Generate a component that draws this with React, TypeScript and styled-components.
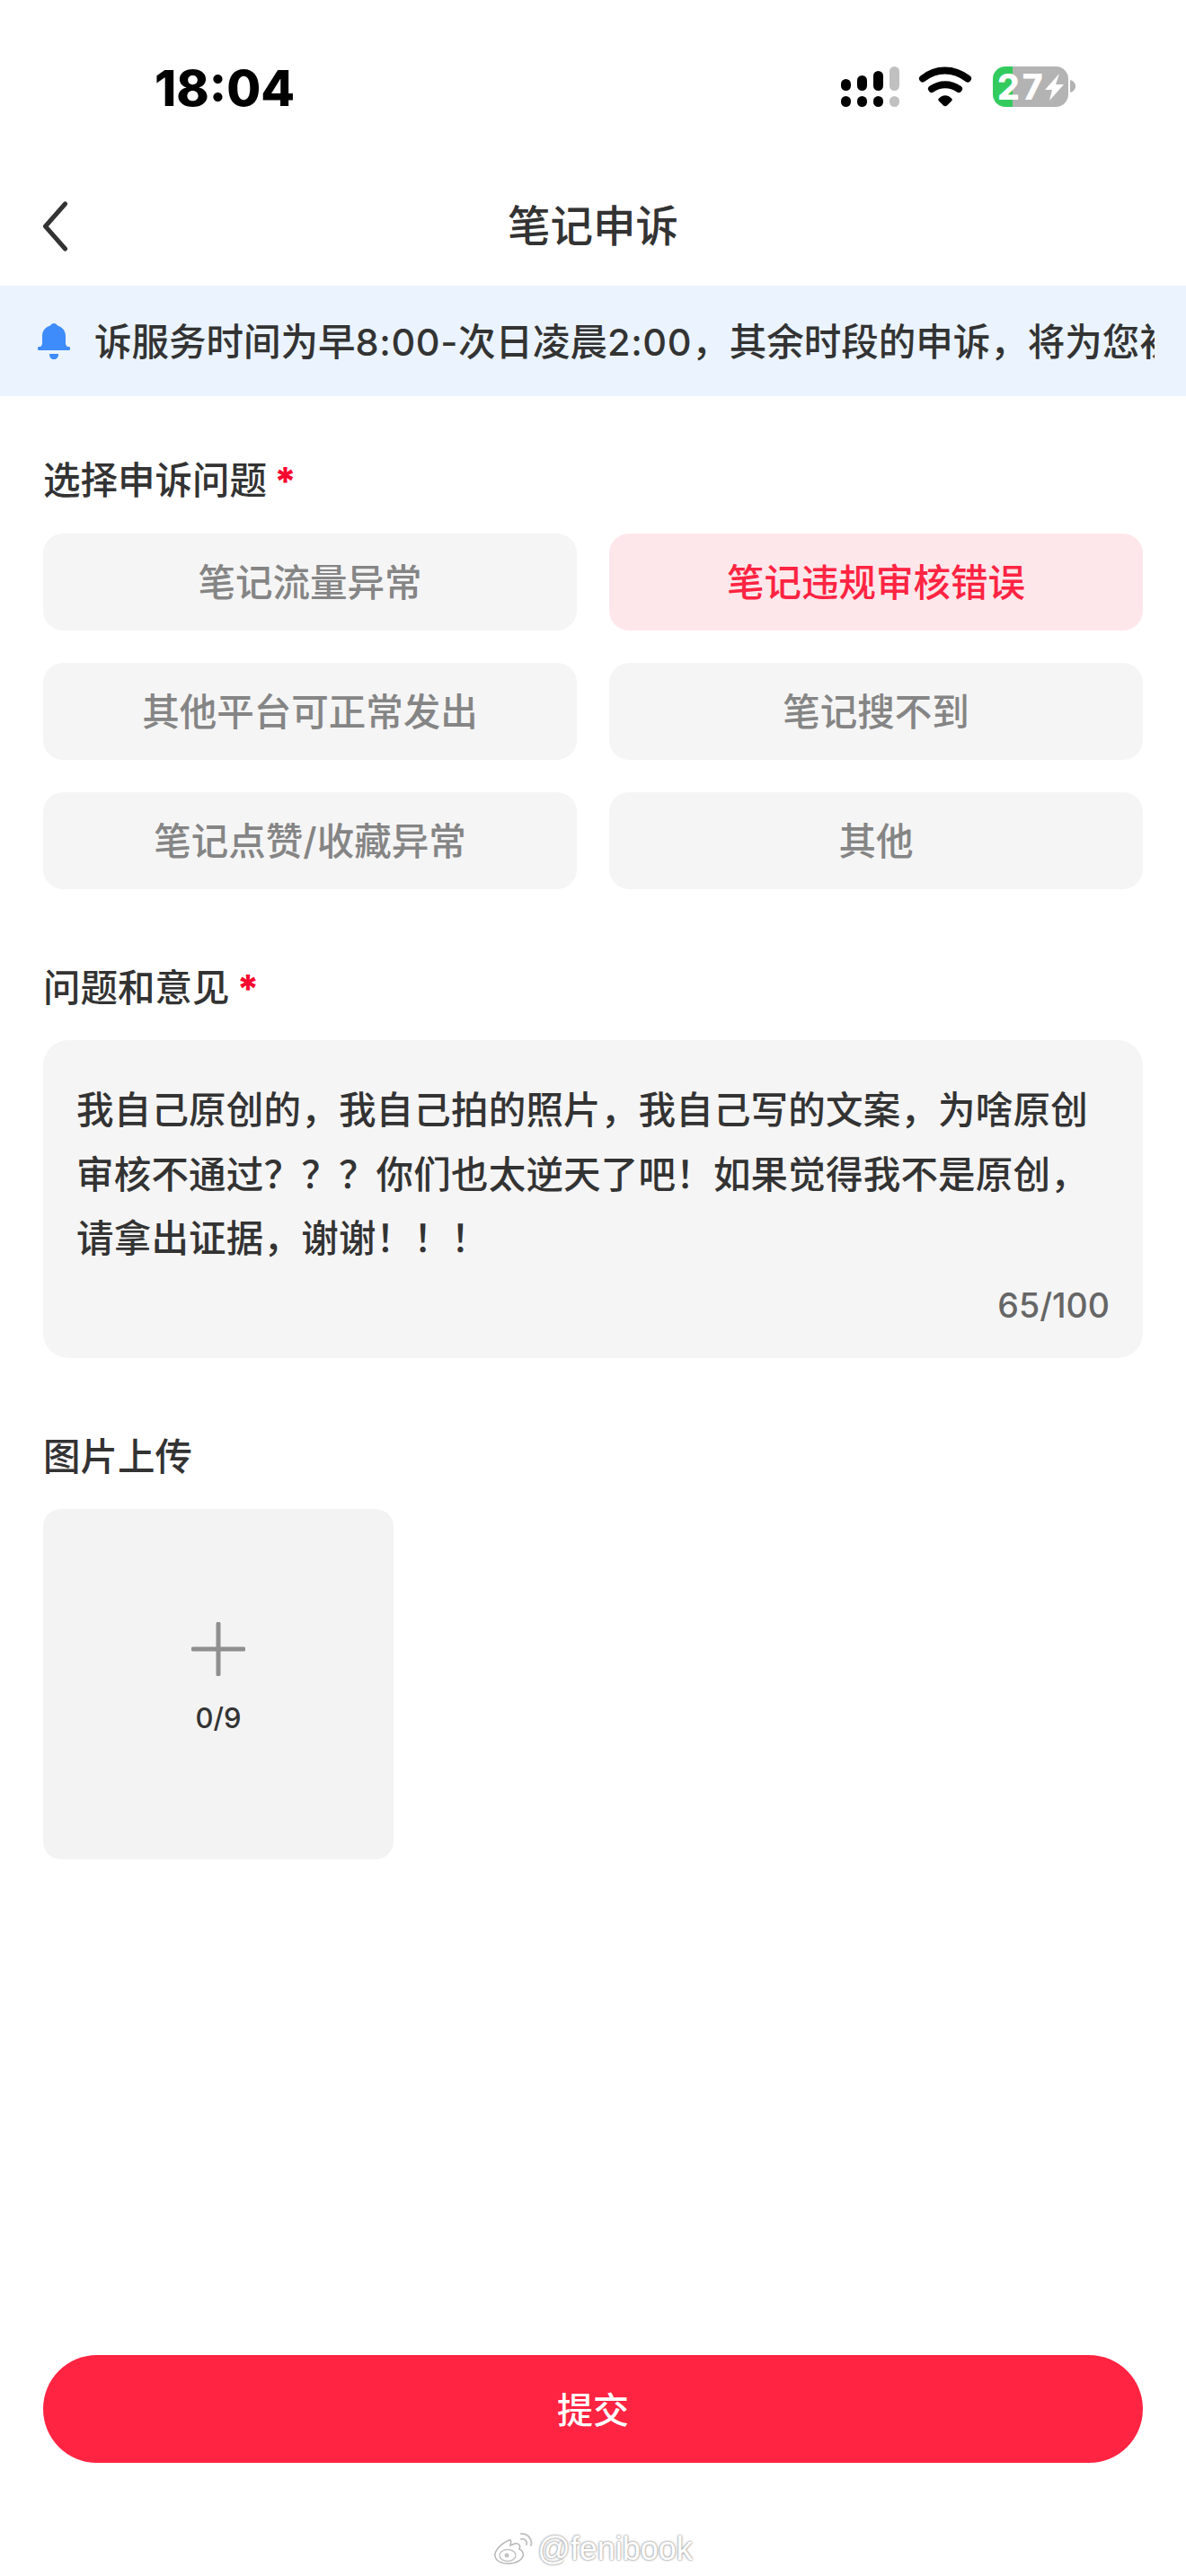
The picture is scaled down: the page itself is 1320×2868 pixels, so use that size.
import * as React from 'react';
import styled, { createGlobalStyle } from 'styled-components';

const GlobalStyle = createGlobalStyle`
  html, body {
    margin: 0;
    padding: 0;
    background: #fff;
  }
  * {
    box-sizing: border-box;
  }
`;

const FONT = `Inter, "Noto Sans CJK SC", sans-serif`;

const Page = styled.div`
  width: 1320px;
  height: 2868px;
  overflow: hidden;
  display: flex;
  flex-direction: column;
  font-family: ${FONT};
  color: #333;
`;

const StatusBar = styled.div`
  height: 198px;
  flex: none;
  display: flex;
  justify-content: space-between;
  padding: 74px 122px 0 172px;
`;

const Clock = styled.div`
  font-size: 55px;
  line-height: 48px;
  font-weight: 800;
  color: #000;
`;

const StatusIcons = styled.svg`
  width: 262px;
  height: 46px;
  display: block;
`;

const BatteryText = styled.text`
  font-family: Inter, sans-serif;
  font-size: 39px;
  font-weight: 800;
  letter-spacing: 3px;
  fill: #fff;
`;

const NavBar = styled.div`
  height: 120px;
  flex: none;
  display: flex;
  align-items: center;
  justify-content: center;
  position: relative;
`;

const BackIcon = styled.svg`
  position: absolute;
  left: 46px;
  top: 25px;
  width: 32px;
  height: 58px;
`;

const NavTitle = styled.div`
  font-size: 47.5px;
  font-weight: 500;
  line-height: 68px;
  margin-top: -12px;
`;

const Notice = styled.div`
  height: 123px;
  flex: none;
  background: #ebf3fe;
  display: flex;
  align-items: center;
  padding: 0 35px 0 42px;
`;

const BellIcon = styled.svg`
  width: 36px;
  height: 40px;
  flex: none;
  margin-right: 27px;
`;

const NoticeText = styled.div`
  flex: 1;
  overflow: hidden;
  white-space: nowrap;
  font-size: 41.5px;
  font-weight: 500;
  line-height: 60px;
  padding-top: 3px;
`;

const Latin = styled.span`
  letter-spacing: 0.6px;
`;

const Content = styled.div`
  flex: 1;
  display: flex;
  flex-direction: column;
  padding: 0 48px;
`;

const SectionTitle = styled.div<{ $top: number }>`
  margin-top: ${(p) => p.$top}px;
  height: 60px;
  line-height: 64px;
  font-size: 41.5px;
  font-weight: 500;
  display: flex;
`;

const Star = styled.span`
  color: #f8062f;
  margin-left: 8px;
  font-weight: 800;
  font-size: 43px;
`;

const OptionGrid = styled.div`
  display: grid;
  grid-template-columns: 594px 594px;
  grid-auto-rows: 108px;
  gap: 36px;
  margin-top: 31px;
`;

const Option = styled.div<{ $active?: boolean }>`
  border-radius: 22px;
  display: flex;
  align-items: center;
  justify-content: center;
  padding-bottom: 4px;
  font-size: 41.5px;
  font-weight: 500;
  background: ${(p) => (p.$active ? '#fee7eb' : '#f5f5f5')};
  color: ${(p) => (p.$active ? '#ff2442' : '#858585')};
`;

const FeedbackBox = styled.div`
  margin-top: 30px;
  height: 354px;
  border-radius: 28px;
  background: #f5f5f5;
  padding: 43px 37px 0;
  display: flex;
  flex-direction: column;
`;

const FeedbackText = styled.div`
  font-size: 41.5px;
  font-weight: 500;
  line-height: 71.5px;
  letter-spacing: 0.2px;
  color: #333;
  white-space: pre;
`;

const Counter = styled.div`
  align-self: flex-end;
  font-size: 37.5px;
  line-height: 44px;
  font-weight: 500;
  color: #666;
  margin-top: 16px;
`;

const UploadTile = styled.div`
  margin-top: 30px;
  width: 390px;
  height: 390px;
  border-radius: 20px;
  background: #f3f3f3;
  display: flex;
  flex-direction: column;
  align-items: center;
  padding-top: 126px;
`;

const PlusIcon = styled.svg`
  width: 60px;
  height: 60px;
  display: block;
`;

const UploadCount = styled.div`
  margin-top: 25px;
  font-size: 31px;
  line-height: 44px;
  font-weight: 500;
  color: #333;
`;

const SubmitButton = styled.div`
  margin-top: 552px;
  height: 120px;
  padding-bottom: 3px;
  border-radius: 60px;
  background: #ff2442;
  color: #fff;
  display: flex;
  align-items: center;
  justify-content: center;
  font-size: 40px;
  font-weight: 500;
`;

const Watermark = styled.div`
  margin-top: 74px;
  display: flex;
  align-items: center;
  justify-content: center;
  gap: 5px;
  height: 44px;
  font-family: "Liberation Sans", sans-serif;
  font-size: 36px;
  color: #fff;
  text-shadow: 0 0 3px #999, 0 0 2px #999;
`;

const WeiboIcon = styled.svg`
  width: 44px;
  height: 38px;
  flex: none;
`;

const options = [
  { label: '笔记流量异常' },
  { label: '笔记违规审核错误', active: true },
  { label: '其他平台可正常发出' },
  { label: '笔记搜不到' },
  { label: '笔记点赞/收藏异常' },
  { label: '其他' },
];

const feedback =
  '我自己原创的，我自己拍的照片，我自己写的文案，为啥原创\n审核不通过？？？你们也太逆天了吧！如果觉得我不是原创，\n请拿出证据，谢谢！！！';

const App: React.FC = () => {
  return (
    <Page>
      <GlobalStyle />
      <StatusBar>
        <Clock>18:04</Clock>
        <StatusIcons viewBox="937 74 262 46">
          <rect x="937" y="107" width="11" height="12" rx="5.500" />
          <rect x="955" y="107" width="11" height="12" rx="5.500" />
          <rect x="973" y="107" width="11" height="12" rx="5.500" />
          <rect x="991" y="107" width="11" height="12" rx="5.500" fill="#c0c0c0" />
          <rect x="937" y="88" width="11" height="13" rx="5.500" />
          <rect x="955" y="84" width="11" height="17" rx="5.500" />
          <rect x="973" y="79" width="11" height="22" rx="5.500" />
          <rect x="991" y="74" width="11" height="27" rx="5.500" fill="#c0c0c0" />
          <path d="M1028 87.500C1043 75.500 1062 75.500 1078 87.500" fill="none" stroke="#000" strokeWidth="8" strokeLinecap="round" />
          <path d="M1038 99C1047 92.500 1059 92.500 1068 99" fill="none" stroke="#000" strokeWidth="8" strokeLinecap="round" />
          <path d="M1046 109.500C1050 105 1056 105 1060 109.500C1061 110.500 1061 111.500 1060 112.500L1055 117.500C1054 118.500 1052 118.500 1051 117.500L1046 112.500C1045 111.500 1045 110.500 1046 109.500Z" />
          <path d="M1128 74H1176A14 14 0 0 1 1190 88V105A14 14 0 0 1 1176 119H1128Z" fill="#b3b3b3" />
          <path d="M1128 74H1120A14 14 0 0 0 1106 88V105A14 14 0 0 0 1120 119H1128Z" fill="#34cb5e" />
          <path d="M1192 89C1196 90 1198 93 1198 96C1198 99 1196 102 1192 103Z" fill="#b3b3b3" />
          <BatteryText x="1111" y="111">27</BatteryText>
          <path d="M1180 82L1164 100H1172L1169 112L1185 94H1176Z" fill="#fff" />
        </StatusIcons>
      </StatusBar>
      <NavBar>
        <BackIcon viewBox="0 0 32 58">
          <path d="M26.500 4L4.500 29L26.500 54" fill="none" stroke="#333" strokeWidth="5" strokeLinecap="round" strokeLinejoin="round" />
        </BackIcon>
        <NavTitle>笔记申诉</NavTitle>
      </NavBar>
      <Notice>
        <BellIcon viewBox="0 0 36 40">
          <path d="M18 0C20 0 21 1 22 2.500C27 4 31 8 31 14V22C31 24 32 25 33 26H34C37 26 37 30 34 30H2C-1 30 -1 26 2 26H3C4 25 5 24 5 22V14C5 8 9 4 14 2.500C15 1 16 0 18 0Z" fill="#3e8bfb" />
          <path d="M13 34H23C23 38 21 40 18 40C15 40 13 38 13 34Z" fill="#3e8bfb" />
        </BellIcon>
        <NoticeText>
          诉服务时间为早<Latin>8:00-</Latin>次日凌晨<Latin>2:00</Latin>，其余时段的申诉，将为您初审
        </NoticeText>
      </Notice>
      <Content>
        <SectionTitle $top={62}>
          选择申诉问题<Star>*</Star>
        </SectionTitle>
        <OptionGrid>
          {options.map((o) => (
            <Option key={o.label} $active={o.active}>
              {o.label}
            </Option>
          ))}
        </OptionGrid>
        <SectionTitle $top={78}>
          问题和意见<Star>*</Star>
        </SectionTitle>
        <FeedbackBox>
          <FeedbackText>{feedback}</FeedbackText>
          <Counter>65/100</Counter>
        </FeedbackBox>
        <SectionTitle $top={78}>图片上传</SectionTitle>
        <UploadTile>
          <PlusIcon viewBox="0 0 60 60">
            <path d="M30 2V58M2 30H58" stroke="#8f8f8f" strokeWidth="5" strokeLinecap="round" />
          </PlusIcon>
          <UploadCount>0/9</UploadCount>
        </UploadTile>
        <SubmitButton>提交</SubmitButton>
        <Watermark>
          <WeiboIcon viewBox="0 0 44 38">
            <path d="M18 9C8 13 1 21 2 27C3 33 11 36 20 35C29 34 35 28 33 23C32 20 29 19 29 19C31 15 28 12 24 13L19 15C20 11 20 8 18 9Z" fill="#fff" stroke="#b5b5b5" strokeWidth="1.500" />
            <ellipse cx="16" cy="26" rx="9" ry="6.500" fill="none" stroke="#c4c4c4" strokeWidth="1.500" />
            <circle cx="15" cy="26" r="2.500" fill="#c4c4c4" />
            <path d="M31 8C35 7 38 10 37 14M31 2C38 1 44 8 42 15" fill="none" stroke="#c4c4c4" strokeWidth="2" strokeLinecap="round" />
          </WeiboIcon>
          @fenibook
        </Watermark>
      </Content>
    </Page>
  );
};

export default App;
